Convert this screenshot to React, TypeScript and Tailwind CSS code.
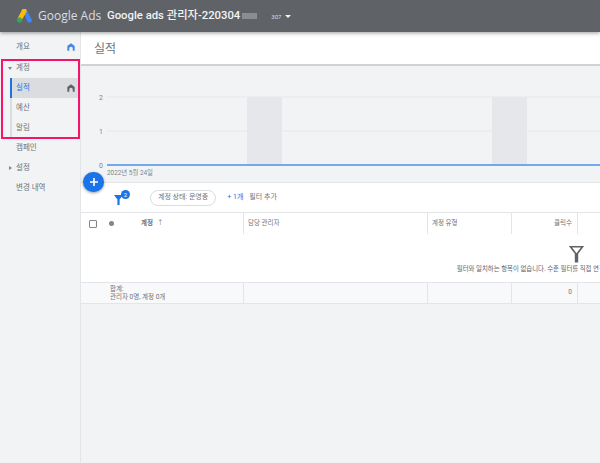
const font = "font-['Roboto','Noto_Sans_CJK_KR',sans-serif]"

function HomeIcon({ color }: { color: string }) {
  return (
    <svg width="8" height="8" viewBox="0 0 12 12">
      <path d="M6 .5 11.5 4.6v6.9H8.6V8.2a2.6 2.6 0 0 0-5.2 0v3.3H.5V4.6z" fill={color} />
    </svg>
  )
}

function NavRow({ label, caret, active, sub, icon }: { label: string; caret?: "down" | "right"; active?: boolean; sub?: boolean; icon?: string }) {
  return (
    <div className={`h-5 flex items-center pr-[5px] ${sub ? "ml-[10px]" : ""} ${sub ? (active ? "border-l-2 border-[#1a73e8] bg-[#dadce0]" : "border-l-2 border-[#dadce0]") : ""}`}>
      <div className={`${sub ? "w-1" : "w-4"} shrink-0 flex justify-end pr-[4px]`}>
        {caret === "down" && <div className="w-0 h-0 border-x-[2px] border-x-transparent border-t-[3px] border-t-[#80868b]" />}
        {caret === "right" && <div className="w-0 h-0 border-y-[2px] border-y-transparent border-l-[3px] border-l-[#80868b]" />}
      </div>
      <span className={`text-[7.5px] leading-none ${active ? "text-[#1a73e8]" : "text-[#6f7378]"}`}>{label}</span>
      {icon && <div className="ml-auto flex"><HomeIcon color={icon} /></div>}
    </div>
  )
}

function Chart() {
  return (
    <svg width="519" height="116" viewBox="0 0 519 116" className="block">
      <rect x="166" y="31" width="35" height="68" fill="#e6e7ea" />
      <rect x="411" y="31" width="35" height="68" fill="#e6e7ea" />
      <line x1="26" y1="31" x2="519" y2="31" stroke="#e6e7ea" />
      <line x1="26" y1="65" x2="519" y2="65" stroke="#e6e7ea" />
      <line x1="26" y1="99" x2="519" y2="99" stroke="#4a90e8" strokeWidth="1.5" />
      <text x="22" y="34" fontSize="7" fill="#80868b" textAnchor="end">2</text>
      <text x="22" y="68" fontSize="7" fill="#80868b" textAnchor="end">1</text>
      <text x="22" y="102" fontSize="7" fill="#80868b" textAnchor="end">0</text>
      <text x="26" y="109" fontSize="6.4" fill="#80868b">2022년 5월 24일</text>
    </svg>
  )
}

export default function App() {
  return (
    <div className={`relative w-[600px] h-[463px] overflow-hidden bg-[#f1f3f4] ${font}`}>
      {/* Header */}
      <header className="relative z-10 h-8 bg-[#5f6368] flex items-center pl-[17px] shadow-[0_1px_4px_rgba(0,0,0,0.4)]">
        <svg width="15" height="14" viewBox="0 0 15 14" className="shrink-0">
          <path d="M5.2.6 9.6 1l5 9.3a2.4 2.4 0 0 1-4.2 2.3z" fill="#4285f4" />
          <path d="M5.2.6a2.4 2.4 0 0 1 4.2 2.3L4.6 11.5.6 9.6z" fill="#fbbc04" />
          <circle cx="2.6" cy="11" r="2.6" fill="#34a853" />
        </svg>
        <span className="ml-[6px] w-[63px] text-[12px] text-[#dadce0] whitespace-nowrap font-['Open_Sans','Noto_Sans',sans-serif]">Google Ads</span>
        <span className="ml-[6px] text-[11.3px] font-medium text-[#f1f3f4] whitespace-nowrap">Google ads 관리자-220304</span>
        <div className="ml-[2px] w-[15px] h-[6px] bg-[#8a8d91]" />
        <span className="ml-[14px] text-[6px] text-[#dadce0]">307</span>
        <div className="ml-[4px] w-0 h-0 border-x-[3px] border-x-transparent border-t-[3px] border-t-[#f1f3f4]" />
      </header>

      <div className="flex h-[431px]">
        {/* Sidebar */}
        <nav className="w-[81px] shrink-0 pt-[5px] border-r border-[#e3e5e8]">
          <NavRow label="개요" icon="#4a86e0" />
          <div className="h-px" />
          <NavRow label="계정" caret="down" />
          <NavRow label="실적" sub active icon="#5f6368" />
          <NavRow label="예산" sub />
          <NavRow label="알림" sub />
          <NavRow label="캠페인" />
          <NavRow label="설정" caret="right" />
          <NavRow label="변경 내역" />
        </nav>

        {/* Main */}
        <main className="flex-1 min-w-0 overflow-hidden">
          <div className="h-[34px] bg-white border-b-2 border-[#cfd1d4] flex items-center pl-[13px] pt-[2px] text-[12px] text-[#6f7378]">실적</div>
          <Chart />

          <div className="w-[990px] bg-white">
            <div className="h-[30px] border-t border-[#e3e5e8] flex items-center text-[7px] text-[#6f7378]">
              <div className="relative ml-[33px] w-[15px] h-[14px]">
                <svg width="9" height="10" viewBox="0 0 9 10" className="absolute left-0 bottom-0">
                  <path d="M0 0h9L5.6 4.4V10H3.4V4.4z" fill="#1a73e8" />
                </svg>
                <div className="absolute right-[-1px] top-[-1px] w-[9px] h-[9px] rounded-full bg-[#1a73e8] text-white text-[6px] leading-[9px] text-center">2</div>
              </div>
              <div className="ml-[21px] h-4 px-[7px] rounded-full border border-[#dadce0] flex items-center">계정 상태: 운영중</div>
              <span className="ml-[11px] text-[#1a73e8]">+ 1개</span>
              <span className="ml-[6px]">필터 추가</span>
            </div>

            <div className="grid grid-cols-[163px_184px_84px_66px_1fr] h-[22px] border-t border-[#e3e5e8] text-[6.5px] text-[#6f7378]">
              <div className="flex items-center border-r border-[#e3e5e8]">
                <div className="ml-[8px] w-2 h-2 rounded-[1px] border border-[#80868b] bg-white" />
                <div className="ml-[12px] w-[5px] h-[5px] rounded-full bg-[#80868b]" />
                <span className="ml-[27px] font-bold">계정</span>
                <span className="ml-[4px]">↑</span>
              </div>
              <div className="flex items-center pl-[4px] border-r border-[#e3e5e8]">담당 관리자</div>
              <div className="flex items-center pl-[4px] border-r border-[#e3e5e8]">계정 유형</div>
              <div className="flex items-center justify-end pr-[5px] border-r border-[#e3e5e8]">클릭수</div>
              <div />
            </div>

            <div className="h-[48px] flex flex-col items-center pt-[12px]">
              <svg width="17" height="17" viewBox="0 0 16 16">
                <path d="M.8 0h14.4L9.6 7.4V15.5H6.4V7.4zM3.9 1.5l3.9 5.1h.4l3.9-5.1z" fill="#5f6368" fillRule="evenodd" />
              </svg>
              <p className="mt-[2px] text-[6.4px] leading-[9px] text-[#5f6368] whitespace-nowrap">필터와 일치하는 항목이 없습니다. 수준 필터를 직접 연결하거나 다른 필터를 사용해 보세요.</p>
            </div>

            <div className="grid grid-cols-[163px_184px_84px_66px_1fr] h-[22px] border-y border-[#e3e5e8] bg-[#f8f9fa] text-[6.5px] text-[#6f7378]">
              <div className="pl-[29px] flex flex-col justify-center leading-[8px] border-r border-[#e3e5e8]">
                <span>합계:</span>
                <span>관리자 0명, 계정 0개</span>
              </div>
              <div className="border-r border-[#e3e5e8]" />
              <div className="border-r border-[#e3e5e8]" />
              <div className="flex items-center justify-end pr-[5px] border-r border-[#e3e5e8]">0</div>
              <div />
            </div>
          </div>
        </main>
      </div>

      {/* Overlays */}
      <div className="absolute left-[83px] top-[172px] z-20 w-[21px] h-5 rounded-full bg-[#1a73e8] shadow-[0_1px_3px_rgba(0,0,0,0.4)] flex items-center justify-center">
        <svg width="10" height="10" viewBox="0 0 10 10"><path d="M4.2 1h1.6v3.2H9v1.6H5.8V9H4.2V5.8H1V4.2h3.2z" fill="#fff" /></svg>
      </div>
      <div className="absolute left-[1px] top-[59px] z-20 w-[79px] h-[80px] border-2 border-[#f5146a] pointer-events-none" />
    </div>
  )
}
